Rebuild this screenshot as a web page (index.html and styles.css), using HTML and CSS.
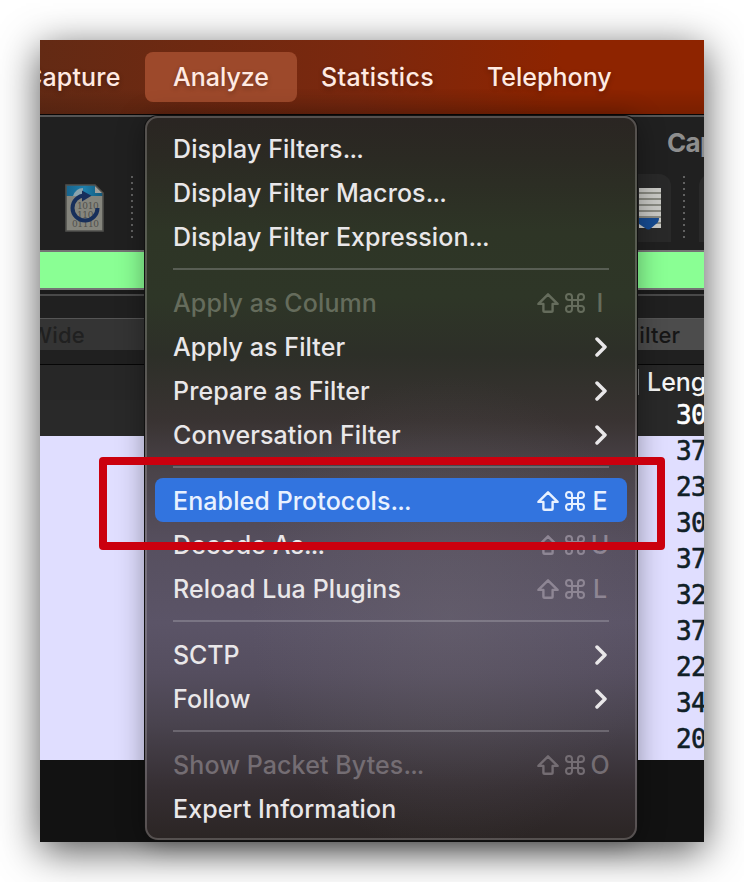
FILE: index.html
```html
<!DOCTYPE html>
<html lang="en">
<head>
<meta charset="utf-8">
<title>Analyze menu</title>
<link rel="stylesheet" href="styles.css">
</head>
<body>
<svg class="defs" width="0" height="0" aria-hidden="true">
  <symbol id="shift" viewBox="0 0 22 20"><path d="M11 1.3 20.6 10.9H15.6V17.4Q15.6 18.7 14.3 18.7H7.7Q6.4 18.7 6.4 17.4V10.9H1.4Z"/></symbol>
  <symbol id="command" viewBox="0 0 20 20"><path d="M7 7V4A3 3 0 1 0 4 7H16A3 3 0 1 0 13 4V16A3 3 0 1 0 16 13H4A3 3 0 1 0 7 16Z"/></symbol>
  <symbol id="chevron" viewBox="0 0 12 20"><path d="M2 2 10 10 2 18"/></symbol>
</svg>
<main class="stage">
  <div class="window">
    <nav class="menubar">
      <span class="bar-item capture">Capture</span>
      <span class="bar-item active">Analyze</span>
      <span class="bar-item statistics">Statistics</span>
      <span class="bar-item telephony">Telephony</span>
    </nav>
    <header class="chrome">
      <div class="title">Capturing</div>
      <div class="toolbar">
        <svg class="reload-icon" width="40" height="49" viewBox="0 0 40 49">
          <defs><linearGradient id="sky" x2="1"><stop stop-color="#18638c"/><stop offset=".5" stop-color="#1d7fac"/><stop offset="1" stop-color="#145778"/></linearGradient></defs>
          <path d="M1 2H30L38 10V48H1Z" fill="#85857d"/>
          <path d="M1 2H30L38 10V13H1Z" fill="url(#sky)"/>
          <path d="M8 13Q11 5 18 5V13Z" fill="#8aa3ad"/>
          <path d="M30 2V10H38Z" fill="#a0a19d"/>
          <path d="M1 2H30L38 10V48H1Z" fill="none" stroke="#50504d" stroke-width="1.6"/>
          <g class="bits"><text x="12" y="25.500">1010</text><text x="12" y="34.500">110</text><text x="7" y="43.500">01110</text></g>
          <path d="M20 12.500A12.500 12.500 0 1 0 32.500 25" fill="none" stroke="#172f5b" stroke-width="4"/>
          <path d="M17 7.500 26.500 12.800 17 18.500Z" fill="#172f5b"/>
        </svg>
        <i class="dots"></i>
        <span class="spacer"></span>
        <div class="tool">
          <svg width="22" height="44" viewBox="0 0 22 44">
            <path d="M0 0H22V40H0Z" fill="#c9c9c5"/>
            <path d="M0 5H22M0 11H22M0 17H22M0 23H22M0 29H22M0 35H22" stroke="#898a82" stroke-width="2"/>
            <path d="M0 30H20Q20 34 17 36L11 41Q9 42.500 6 40L0 36Z" fill="#164b91"/>
          </svg>
        </div>
        <i class="dots"></i>
        <div class="tool next"></div>
      </div>
    </header>
    <div class="filter-bar"></div>
    <div class="gap"></div>
    <div class="buttons"><span class="wide">Wide</span><span class="filter">Filter</span></div>
    <div class="subgap"></div>
    <div class="table-head"><span class="length">Length</span></div>
    <div class="packets">
      <div class="packet selected">307</div>
      <div class="packet">37</div><div class="packet">23</div><div class="packet">307</div>
      <div class="packet">37</div><div class="packet">32</div><div class="packet">37</div>
      <div class="packet">22</div><div class="packet">34</div><div class="packet">207</div>
    </div>
    <div class="footer"></div>
  </div>

  <div class="menu">
    <div class="item"><span>Display Filters<em>...</em></span></div>
    <div class="item"><span>Display Filter Macros<em>...</em></span></div>
    <div class="item"><span>Display Filter Expression<em>...</em></span></div>
    <hr>
    <div class="item off green"><span>Apply as Column</span><svg class="shift"><use href="#shift"/></svg><svg class="cmd"><use href="#command"/></svg><b>I</b></div>
    <div class="item"><span>Apply as Filter</span><svg class="chev"><use href="#chevron"/></svg></div>
    <div class="item"><span>Prepare as Filter</span><svg class="chev"><use href="#chevron"/></svg></div>
    <div class="item"><span>Conversation Filter</span><svg class="chev"><use href="#chevron"/></svg></div>
    <hr>
    <div class="item hot"><span>Enabled Protocols<em>...</em></span><svg class="shift"><use href="#shift"/></svg><svg class="cmd"><use href="#command"/></svg><b>E</b></div>
    <div class="item dimkeys"><span>Decode As<em>...</em></span><svg class="shift"><use href="#shift"/></svg><svg class="cmd"><use href="#command"/></svg><b>U</b></div>
    <div class="item dimkeys"><span>Reload Lua Plugins</span><svg class="shift"><use href="#shift"/></svg><svg class="cmd"><use href="#command"/></svg><b>L</b></div>
    <hr>
    <div class="item"><span class="tight">SCTP</span><svg class="chev"><use href="#chevron"/></svg></div>
    <div class="item"><span>Follow</span><svg class="chev"><use href="#chevron"/></svg></div>
    <hr>
    <div class="item off"><span>Show Packet Bytes<em>...</em></span><svg class="shift"><use href="#shift"/></svg><svg class="cmd"><use href="#command"/></svg><b>O</b></div>
    <div class="item"><span>Expert Information</span></div>
  </div>
  <div class="callout"></div>
</main>
</body>
</html>
```
FILE: styles.css
```css
* { box-sizing: border-box; }
body { margin: 0; background: #fff; font-family: Inter, sans-serif; overflow: hidden; }
.defs { position: absolute; }
.stage { position: relative; width: 744px; height: 882px; padding: 40px; overflow: hidden; }
.window { width: 664px; height: 802px; overflow: hidden; background: #202020; box-shadow: 0 9px 38px rgba(0,0,0,.68); }
.menubar { display: flex; height: 75px; padding-top: 12px; border-bottom: 1px solid #080606; background: linear-gradient(180deg, transparent 65%, rgba(0,0,0,.15)), linear-gradient(95deg, #632a14, #7b280e 48%, #8e2400 78%, #8e2400); color: #ffeae2; font-size: 25px; font-weight: 500; text-shadow: 0 2px 5px rgba(0,0,0,.3); }
.bar-item { height: 50px; line-height: 50px; white-space: nowrap; }
.capture { width: 105px; margin-left: -16px; margin-right: 16px; letter-spacing: .15px; }
.active { width: 152px; padding-left: 28px; border-radius: 8px; background: #9d492b; }
.statistics { width: 167px; padding-left: 24px; letter-spacing: .3px; }
.telephony { padding-left: 23px; }
.chrome { height: 135px; border-top: 2px solid #555; background: #202020; }
.title { height: 57px; padding: 10px 0 0 627px; color: #8e8e8e; font-size: 26px; font-weight: 700; line-height: 32px; letter-spacing: -.7px; white-space: nowrap; }
.toolbar { display: flex; height: 76px; }
.reload-icon { flex: none; margin: 9px 0 0 25px; }
.bits { fill: #50504c; font: 9px "DejaVu Serif", serif; letter-spacing: -.4px; }
.dots { flex: none; width: 2px; height: 63px; margin: 2px 0 0 26px; background: repeating-linear-gradient(#616161 0 2px, transparent 2px 6px); }
.spacer { flex: none; width: 465px; }
.tool { flex: none; width: 73px; height: 68px; padding: 14px 0 0 41px; border-radius: 12px 12px 0 0; background: #292929; }
.tool + .dots { margin-left: 12px; }
.next { margin-left: 14px; }
.filter-bar { height: 40px; border: solid #747474; border-width: 2px 0; background: #8aff94; }
.gap { height: 28px; border-top: 4px solid #1b1b1b; background: linear-gradient(#494949 2px, #202020 2px); }
.buttons { display: flex; height: 32px; border-top: 1px solid #555; background: linear-gradient(90deg, #343434 50%, #4c4c4c 50%); font-size: 22px; font-weight: 500; line-height: 32px; color: #161616; letter-spacing: .2px; }
.wide { width: 596px; margin-left: -10px; color: #202020; }
.subgap { height: 15px; border-bottom: 1px solid #060606; background: #202020; }
.table-head { display: flex; height: 35px; padding: 4px 0 5px 598px; background: #272727; color: #f4f4f4; font-size: 25px; font-weight: 450; line-height: 26px; }
.length { padding-left: 8px; border-left: 1px solid #777; }
.packet { height: 36px; padding-left: 636px; background: #e0deff; color: #102027; font: 26px/30px "DejaVu Sans Mono", monospace; letter-spacing: -.6px; -webkit-text-stroke: .6px currentColor; }
.packet.selected { background: #292929; color: #fff; }
.footer { height: 82px; background: #121212; }
.menu { position: absolute; left: 145px; top: 116px; width: 492px; height: 724px; padding: 8px; border: 2px solid rgba(210,205,205,.26); border-radius: 13px; background: radial-gradient(ellipse 200px 240px at 62% 69%, rgba(120,115,120,.25), transparent), linear-gradient(#2a2522 0, #2b2a23 6%, #2e3526 16%, #2e3627 25%, #2d2f28 33%, #393332 42%, #4a4349 49%, #575060 60%, #5b5467 70%, #554e5f 77%, #49434e 84%, #352e32 93%, #2b2524 100%); background-origin: border-box; box-shadow: 0 0 0 1px #111, 0 4px 28px rgba(0,0,0,.38); }
.item { display: flex; align-items: center; height: 44px; padding: 0 18px; border-radius: 8px; color: #e9e7e9; font-size: 25px; font-weight: 450; line-height: 44px; white-space: nowrap; }
.item span { flex: 1; padding-top: 1px; letter-spacing: .1px; }
.item em { font-style: normal; letter-spacing: -.85px; }
.item .tight { letter-spacing: -.1px; }
.item b { width: 20px; margin: 1px -1px 0 5px; text-align: center; font-weight: 450; }
.item svg { flex: none; margin-top: 1px; fill: none; stroke: currentColor; stroke-width: 2.4px; stroke-linejoin: round; stroke-linecap: round; }
.item .shift { width: 22px; height: 20px; margin-right: 6px; }
.item .cmd { width: 20px; height: 20px; stroke-width: 2px; }
.item .chev { width: 12px; height: 20px; margin-right: 2px; stroke-width: 3.5px; }
.hot { background: #3274df; color: #e8f1ff; }
.off { color: #746d73; }
.green { color: #656c5c; }
.dimkeys svg, .dimkeys b { color: #8e8694; }
.menu hr { height: 2px; margin: 10px 18px; border: 0; background: rgba(215,215,220,.25); }
.callout { position: absolute; left: 99px; top: 457px; width: 566px; height: 93px; border: 8px solid #cb000e; border-radius: 4px; }
```
